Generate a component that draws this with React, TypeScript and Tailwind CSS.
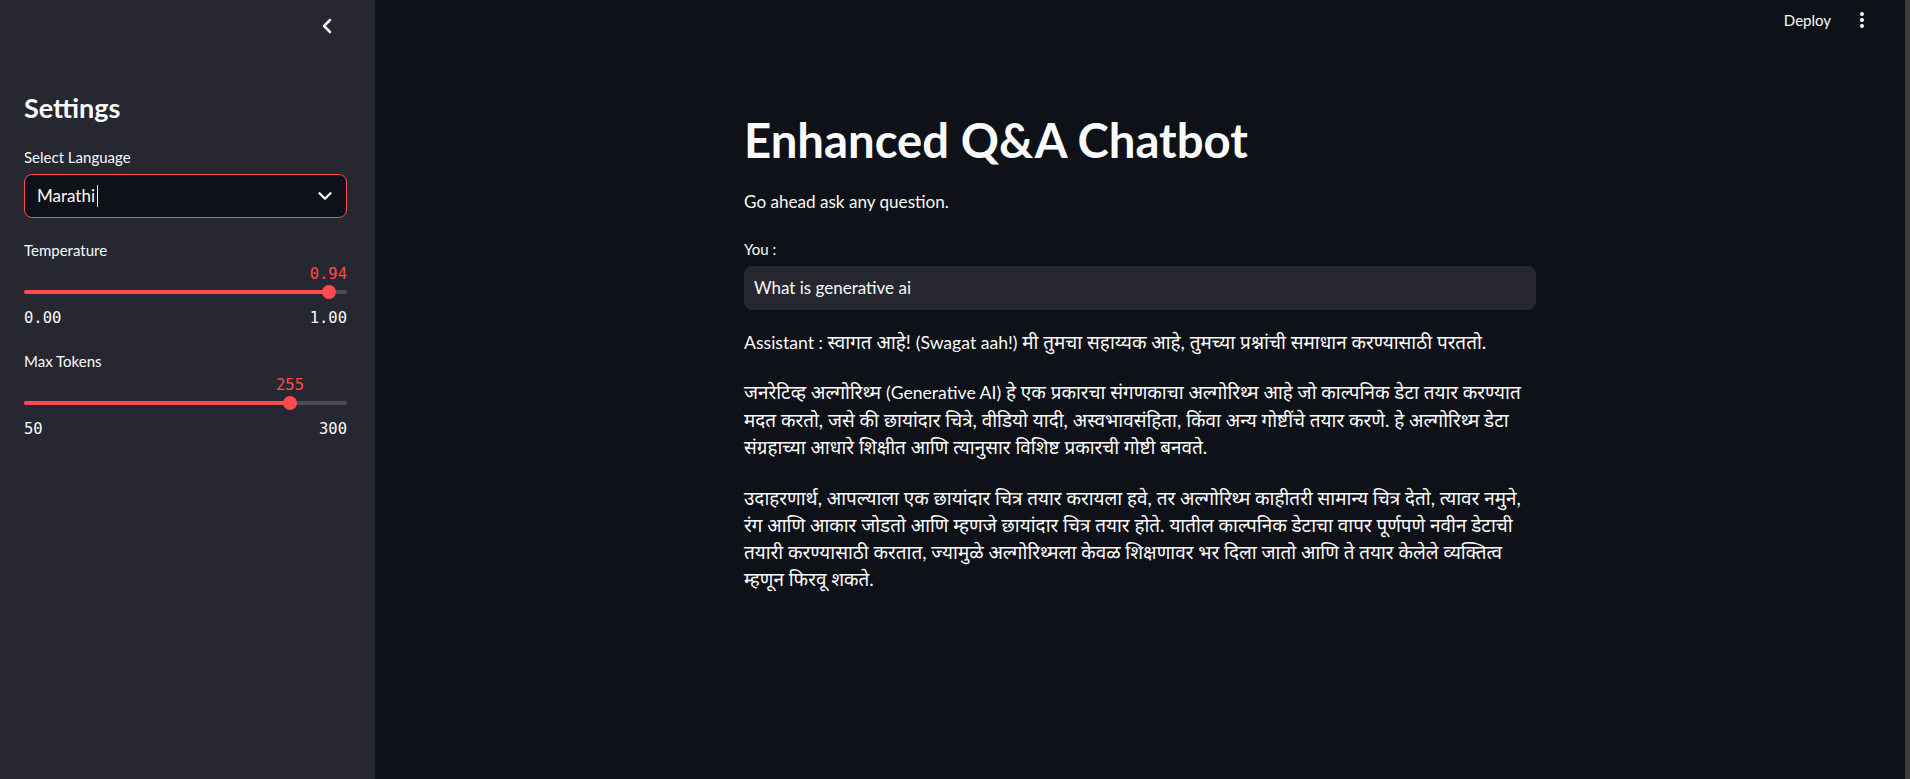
import React from "react";
import { ChevronLeft, ChevronDown } from "lucide-react";

function Slider({
  label,
  value,
  min,
  max,
  thumb,
  valueAlign,
  labelTop,
}: {
  label: string;
  value: string;
  min: string;
  max: string;
  thumb: number;
  valueAlign: "right" | "center";
  labelTop: string;
}) {
  return (
    <div className={`flex flex-col ${labelTop}`}>
      <div className="h-[20px] text-[15px] leading-[20px] text-[#fafafa]">{label}</div>
      <div className="relative mt-[4px] h-[20px] font-['DejaVu_Sans_Mono',monospace] text-[15.5px] leading-[20px] text-[#ff4b4b]">
        {valueAlign === "right" ? (
          <div className="absolute right-0 top-0">{value}</div>
        ) : (
          <div className="absolute top-0 -translate-x-1/2" style={{ left: thumb }}>
            {value}
          </div>
        )}
      </div>
      <div className="relative mt-[1px] h-[14px]">
        <div className="absolute left-0 right-0 top-[5px] h-[4px] rounded-full bg-[#4a4b55]" />
        <div
          className="absolute left-0 top-[5px] h-[4px] rounded-full bg-[#ff4b4b]"
          style={{ width: thumb }}
        />
        <div
          className="absolute top-0 h-[14px] w-[14px] -translate-x-1/2 rounded-full bg-[#ff4b4b]"
          style={{ left: thumb }}
        />
      </div>
      <div className="mt-[9px] flex h-[20px] justify-between font-['DejaVu_Sans_Mono',monospace] text-[15.5px] leading-[20px] text-[#fafafa]">
        <span>{min}</span>
        <span>{max}</span>
      </div>
    </div>
  );
}

export default function App() {
  return (
    <div className="flex h-[779px] w-full overflow-hidden bg-[#0e1117] font-['Lato','Noto_Sans_Devanagari','Noto_Sans',sans-serif] text-[#fafafa]">
      {/* Sidebar */}
      <aside className="flex h-full w-[375px] shrink-0 flex-col bg-[#262730]">
        <div className="flex h-[52px] items-center justify-end pr-[36px]">
          <ChevronLeft size={24} strokeWidth={2.5} className="text-[#fafafa]" />
        </div>
        <div className="flex flex-col pl-[24px] pr-[28px]">
          <div className="mt-[40px] h-[32px] text-[27px] font-bold leading-[32px]">Settings</div>
          <div className="mt-[23px] h-[20px] text-[15px] leading-[20px]">Select Language</div>
          <div className="mt-[7px] flex h-[44px] items-center justify-between rounded-[8px] border border-[#ff4b4b] bg-[#0e1117] pl-[12px] pr-[10px]">
            <div className="flex items-center">
              <span className="text-[17px]">Marathi</span>
              <span className="ml-[2px] h-[22px] w-[1px] bg-[#fafafa]" />
            </div>
            <ChevronDown size={22} strokeWidth={2.5} className="text-[#fafafa]" />
          </div>
          <Slider
            label="Temperature"
            value="0.94"
            min="0.00"
            max="1.00"
            thumb={305}
            valueAlign="right"
            labelTop="mt-[22px]"
          />
          <Slider
            label="Max Tokens"
            value="255"
            min="50"
            max="300"
            thumb={266}
            valueAlign="center"
            labelTop="mt-[23px]"
          />
        </div>
      </aside>

      {/* Main */}
      <main className="flex h-full flex-1 flex-col">
        <div className="flex h-[40px] items-center justify-end">
          <span className="text-[15px] leading-[20px]">Deploy</span>
          <div className="ml-[29px] mr-[41px] flex flex-col items-center gap-[2px]">
            <span className="h-[4px] w-[4px] rounded-full bg-[#fafafa]" />
            <span className="h-[4px] w-[4px] rounded-full bg-[#fafafa]" />
            <span className="h-[4px] w-[4px] rounded-full bg-[#fafafa]" />
          </div>
        </div>
        <div className="mx-auto flex w-[792px] flex-col">
          <h1 className="mt-[72px] h-[56px] text-[47.3px] font-bold leading-[56px]">Enhanced Q&amp;A Chatbot</h1>
          <p className="mt-[20px] h-[28px] text-[17.1px] leading-[28px]">Go ahead ask any question.</p>
          <div className="mt-[23px] h-[20px] text-[15px] leading-[20px]">You :</div>
          <div className="mt-[7px] flex h-[44px] items-center rounded-[8px] bg-[#262730] pl-[10px] text-[17px]">
            What is generative ai
          </div>
          <p className="mt-[18px] text-[18.9px] leading-[27px]">
            <span className="text-[17.6px]">Assistant : </span>स्वागत आहे! <span className="text-[17.6px]">(Swagat aah!)</span> मी तुमचा सहाय्यक आहे, तुमच्या प्रश्नांची समाधान करण्यासाठी परततो.
          </p>
          <p className="mt-[22px] text-[18.9px] leading-[27px]">
            जनरेटिव्ह अल्गोरिथ्म <span className="text-[17.6px]">(Generative AI)</span> हे एक प्रकारचा संगणकाचा अल्गोरिथ्म आहे जो काल्पनिक डेटा तयार करण्यात मदत करतो, जसे की छायांदार चित्रे, वीडियो यादी, अस्वभावसंहिता, किंवा अन्य गोष्टींचे तयार करणे. हे अल्गोरिथ्म डेटा संग्रहाच्या आधारे शिक्षीत आणि त्यानुसार विशिष्ट प्रकारची गोष्टी बनवते.
          </p>
          <p className="mt-[24px] text-[18.9px] leading-[27px]">
            उदाहरणार्थ, आपल्याला एक छायांदार चित्र तयार करायला हवे, तर अल्गोरिथ्म काहीतरी सामान्य चित्र देतो, त्यावर नमुने, रंग आणि आकार जोडतो आणि म्हणजे छायांदार चित्र तयार होते. यातील काल्पनिक डेटाचा वापर पूर्णपणे नवीन डेटाची तयारी करण्यासाठी करतात, ज्यामुळे अल्गोरिथ्मला केवळ शिक्षणावर भर दिला जातो आणि ते तयार केलेले व्यक्तित्व म्हणून फिरवू शकते.
          </p>
        </div>
      </main>
      <div className="h-full w-[5px] shrink-0 bg-[#3c3c3c]" />
    </div>
  );
}
